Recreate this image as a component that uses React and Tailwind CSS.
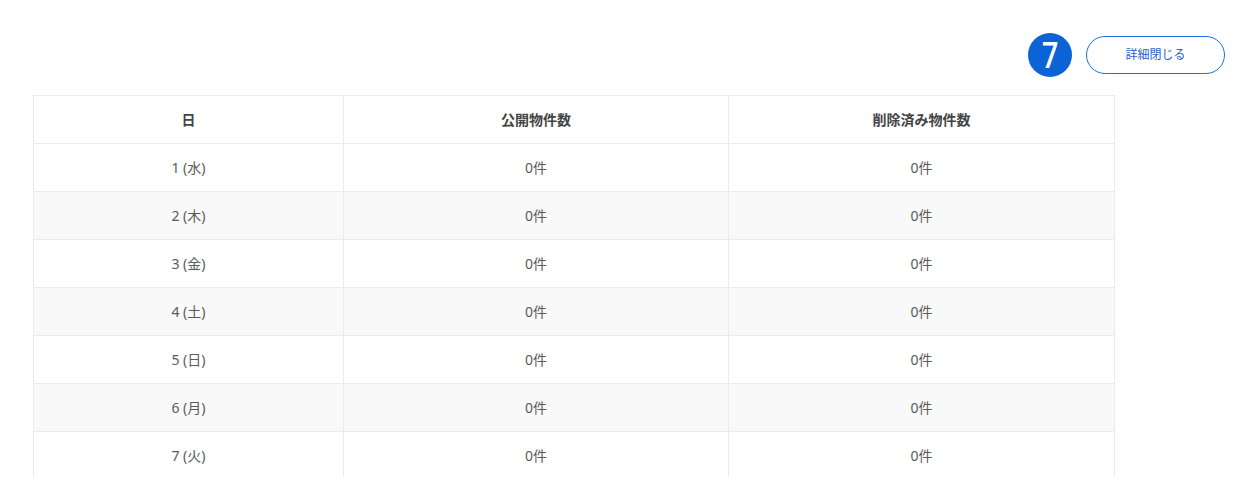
const days = ["1 (水)", "2 (木)", "3 (金)", "4 (土)", "5 (日)", "6 (月)", "7 (火)"];

export default function App() {
  return (
    <div className="w-[1235px] h-[477px] overflow-hidden bg-white text-[14px] text-[#5a5a5a]" style={{ fontFamily: '"Noto Sans", "Noto Sans CJK JP", sans-serif' }}>
      <div className="flex justify-end items-center gap-[14px] pt-[33px] pr-[10px]">
        <div className="w-[44px] h-[44px] rounded-full bg-[#0b63d6] flex items-center justify-center text-white text-[36px] font-medium leading-none pt-[1px]" style={{ fontFamily: 'Roboto, sans-serif' }}>
          <span className="inline-block scale-x-[0.8]">7</span>
        </div>
        <button className="w-[139px] h-[38px] rounded-full border border-[#1f6fe0] text-[#1f5fd0] text-[12px]">
          詳細閉じる
        </button>
      </div>
      <div className="pl-[33px] pt-[18px]">
        <table className="w-[1081px] border-collapse table-fixed">
          <colgroup>
            <col className="w-[310px]" />
            <col className="w-[385px]" />
            <col className="w-[386px]" />
          </colgroup>
          <thead>
            <tr className="h-[48px] text-[#444] font-bold">
              <th className="border border-[#e9ecef]">日</th>
              <th className="border border-[#e9ecef]">公開物件数</th>
              <th className="border border-[#e9ecef]">削除済み物件数</th>
            </tr>
          </thead>
          <tbody>
            {days.map((d, i) => (
              <tr key={d} className={`h-[48px] text-center ${i % 2 === 1 ? "bg-[#f9f9f9]" : "bg-white"}`}>
                <td className="border border-[#e9ecef]">{d}</td>
                <td className="border border-[#e9ecef]">0件</td>
                <td className="border border-[#e9ecef]">0件</td>
              </tr>
            ))}
          </tbody>
        </table>
      </div>
    </div>
  );
}
